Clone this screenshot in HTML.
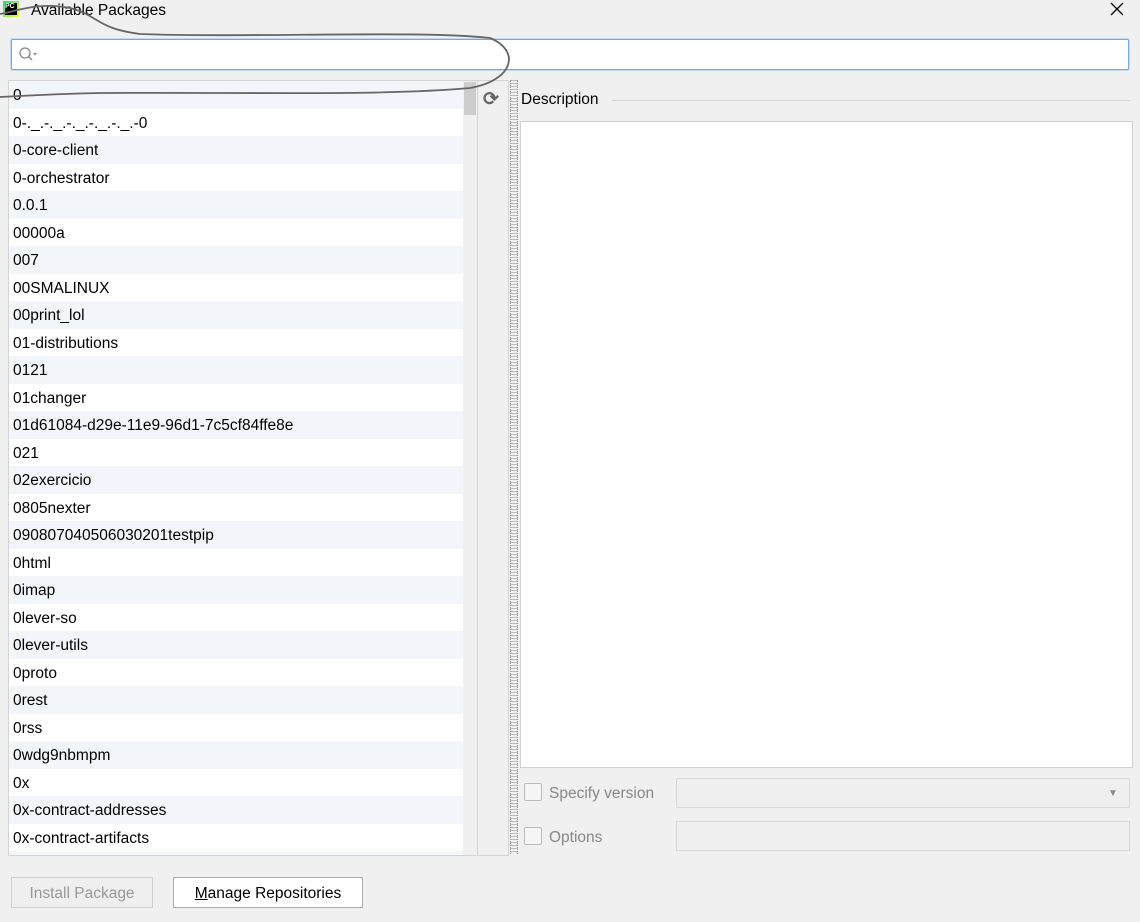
<!DOCTYPE html>
<html><head><style>
body{margin:0;width:1140px;height:922px;background:#f0f0f0;font-family:"Liberation Sans",sans-serif;position:relative;overflow:hidden;color:#000}
.abs{position:absolute}
.row{height:27.5px;line-height:30px;padding-left:4px;font-size:15.5px;white-space:nowrap}
.row:nth-child(odd){background:#f2f5fa}
.row:nth-child(even){background:#fff}
</style></head><body>
<div class="abs" style="left:3px;top:1px;width:16px;height:16px;background:linear-gradient(135deg,#21d789,#fcf84a);"><div style="position:absolute;left:2px;top:2px;width:12px;height:12px;background:#000;color:#fff;font-size:7px;line-height:8px;font-weight:bold">PC</div></div>
<div class="abs" style="left:31px;top:1px;font-size:15.5px;line-height:20px">Available Packages</div>
<svg class="abs" style="left:1110px;top:2px" width="14" height="14"><path d="M1 1L13 13M13 1L1 13" stroke="#000" stroke-width="1.3"/></svg>
<div class="abs" style="left:11px;top:39px;width:1116px;height:29px;background:#fff;border:1px solid #7aa7d8;box-shadow:0 0 0 1px #c4d9ef;border-radius:2px"></div>
<svg class="abs" style="left:17px;top:45px" width="24" height="18"><circle cx="8" cy="8" r="5" fill="none" stroke="#888" stroke-width="1.3"/><line x1="11.5" y1="11.5" x2="15" y2="15" stroke="#888" stroke-width="1.5"/><path d="M16 8h4l-2 2.5z" fill="#888"/></svg>
<div class="abs" style="left:8px;top:80px;width:468px;height:774px;border:1px solid #d4d4d4;background:#fff;overflow:hidden">
<div>
<div class="row">0</div><div class="row">0-._.-._.-._.-._.-._.-0</div><div class="row">0-core-client</div><div class="row">0-orchestrator</div><div class="row">0.0.1</div><div class="row">00000a</div><div class="row">007</div><div class="row">00SMALINUX</div><div class="row">00print_lol</div><div class="row">01-distributions</div><div class="row">0121</div><div class="row">01changer</div><div class="row">01d61084-d29e-11e9-96d1-7c5cf84ffe8e</div><div class="row">021</div><div class="row">02exercicio</div><div class="row">0805nexter</div><div class="row">090807040506030201testpip</div><div class="row">0html</div><div class="row">0imap</div><div class="row">0lever-so</div><div class="row">0lever-utils</div><div class="row">0proto</div><div class="row">0rest</div><div class="row">0rss</div><div class="row">0wdg9nbmpm</div><div class="row">0x</div><div class="row">0x-contract-addresses</div><div class="row">0x-contract-artifacts</div><div class="row">0x-contract-wrappers</div>
</div>
<div class="abs" style="left:454px;top:0;width:14px;height:774px;background:#f0f0f0"><div style="margin:1px 1px;height:33px;background:#cdcdcd"></div></div>
</div>
<div class="abs" style="left:477px;top:80px;width:31px;height:774px;border:1px solid #d4d4d4;border-left:none"></div>
<div class="abs" style="left:483px;top:88px;font-size:19px;color:#666;font-weight:bold">⟳</div>
<div class="abs" style="left:510px;top:80px;width:6px;height:774px;border-left:1px dotted #999;border-right:1px dotted #999;background:repeating-linear-gradient(#bbb 0 1px,#f0f0f0 1px 3px)"></div>
<div class="abs" style="left:521px;top:91px;font-size:15.5px">Description</div>
<div class="abs" style="left:612px;top:100px;width:518px;height:1px;background:#d4d4d4"></div>
<div class="abs" style="left:520px;top:121px;width:611px;height:645px;background:#fff;border:1px solid #d0d0d0"></div>
<div class="abs" style="left:524px;top:783px;width:16px;height:16px;border:1px solid #bbb;border-radius:2px;background:#f5f5f5"></div>
<div class="abs" style="left:549px;top:785px;font-size:15.5px;color:#888">Specify version</div>
<div class="abs" style="left:676px;top:778px;width:452px;height:28px;border:1px solid #d8d8d8;border-radius:2px;background:#efefef"></div>
<div class="abs" style="left:1108px;top:788px;font-size:10px;color:#888">▼</div>
<div class="abs" style="left:524px;top:827px;width:16px;height:16px;border:1px solid #bbb;border-radius:2px;background:#f5f5f5"></div>
<div class="abs" style="left:549px;top:829px;font-size:15.5px;color:#888">Options</div>
<div class="abs" style="left:676px;top:821px;width:452px;height:28px;border:1px solid #d8d8d8;background:#efefef"></div>
<div class="abs" style="left:11px;top:877px;width:140px;height:29px;border:1px solid #cfcfcf;background:#efefef;color:#999;font-size:15.5px;line-height:32px;text-align:center">Install Package</div>
<div class="abs" style="left:173px;top:877px;width:188px;height:29px;border:1px solid #adadad;background:#fff;font-size:15.5px;line-height:32px;text-align:center"><u>M</u>anage Repositories</div>
<svg class="abs" style="left:0;top:0" width="540" height="110"><path d="M0 14 C20 10 40 2 70 8 C100 16 95 28 140 34 C250 38 420 30 490 38 C520 50 515 80 470 88 C380 96 250 92 100 93 C50 94 20 96 0 97" fill="none" stroke="#666" stroke-width="1.8"/></svg>
</body></html>
